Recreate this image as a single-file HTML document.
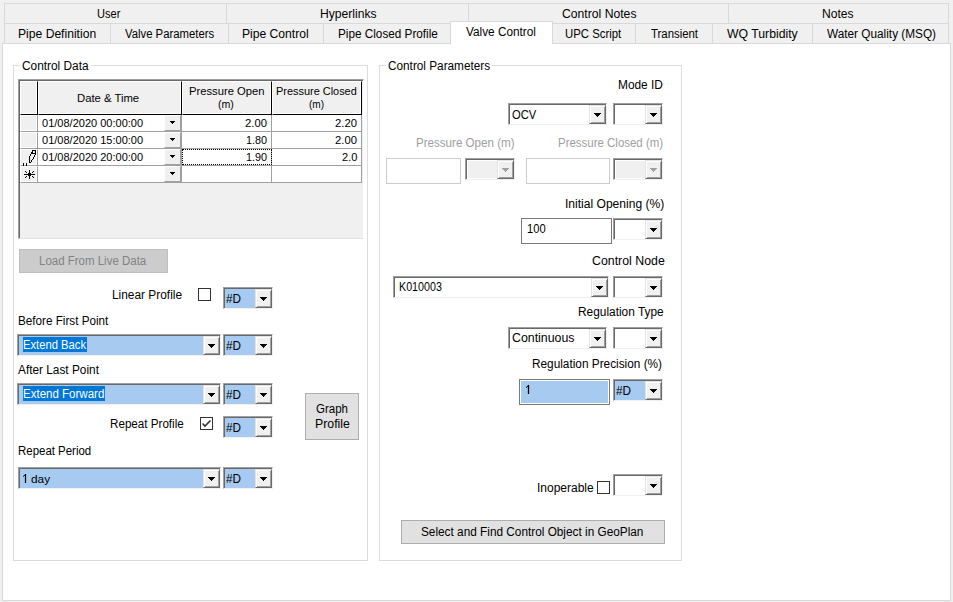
<!DOCTYPE html><html><head><meta charset="utf-8"><style>
html,body{margin:0;padding:0;}
body{width:953px;height:602px;position:relative;overflow:hidden;background:#f0f0f0;font-family:"Liberation Sans",sans-serif;font-size:12px;color:#000;}
.t{position:absolute;white-space:nowrap;line-height:14px;transform-origin:0 0;}
.b{position:absolute;box-sizing:border-box;}
.a{position:absolute;}
.cb{position:absolute;box-sizing:border-box;border-style:solid;border-width:1px;border-color:#a0a0a0 #f0f0f0 #f0f0f0 #a0a0a0;box-shadow:inset 1px 1px 0 #696969;}
.btn3{position:absolute;box-sizing:border-box;background:#f0f0f0;border-style:solid;border-width:1px;border-color:#e3e3e3 #696969 #696969 #e3e3e3;box-shadow:inset 1px 1px 0 #fff,inset -1px -1px 0 #a0a0a0;}
</style></head><body>

<div class="b" style="left:4px;top:3px;width:223px;height:21px;border:1px solid #d9d9d9;background:#f0f0f0;"></div>
<div class="b" style="left:226px;top:3px;width:243px;height:21px;border:1px solid #d9d9d9;background:#f0f0f0;"></div>
<div class="b" style="left:468px;top:3px;width:261px;height:21px;border:1px solid #d9d9d9;background:#f0f0f0;"></div>
<div class="b" style="left:728px;top:3px;width:221px;height:21px;border:1px solid #d9d9d9;background:#f0f0f0;"></div>
<div class="b" style="left:4px;top:23px;width:107px;height:21px;border:1px solid #d9d9d9;background:#f0f0f0;"></div>
<div class="b" style="left:110px;top:23px;width:119px;height:21px;border:1px solid #d9d9d9;background:#f0f0f0;"></div>
<div class="b" style="left:228px;top:23px;width:96px;height:21px;border:1px solid #d9d9d9;background:#f0f0f0;"></div>
<div class="b" style="left:323px;top:23px;width:128px;height:21px;border:1px solid #d9d9d9;background:#f0f0f0;"></div>
<div class="b" style="left:552px;top:23px;width:84px;height:21px;border:1px solid #d9d9d9;background:#f0f0f0;"></div>
<div class="b" style="left:635px;top:23px;width:78px;height:21px;border:1px solid #d9d9d9;background:#f0f0f0;"></div>
<div class="b" style="left:712px;top:23px;width:101px;height:21px;border:1px solid #d9d9d9;background:#f0f0f0;"></div>
<div class="b" style="left:812px;top:23px;width:137px;height:21px;border:1px solid #d9d9d9;background:#f0f0f0;"></div>
<div class="b" style="left:2px;top:43px;width:949px;height:558px;border:1px solid #d9d9d9;background:#fff;"></div>
<div class="b" style="left:450px;top:21px;width:103px;height:23px;border:1px solid #d9d9d9;border-bottom:none;background:#fff;"></div>
<div class="b" style="left:451px;top:43px;width:101px;height:2px;background:#fff;"></div>
<div class="t" style="left:96.82px;top:7px;font-size:12px;transform:scaleX(0.9204);">User</div>
<div class="t" style="left:319.51px;top:7px;font-size:12px;transform:scaleX(1.0094);">Hyperlinks</div>
<div class="t" style="left:561.63px;top:7px;font-size:12px;transform:scaleX(1.0151);">Control Notes</div>
<div class="t" style="left:821.71px;top:7px;font-size:12px;transform:scaleX(1.0073);">Notes</div>
<div class="t" style="left:17.90px;top:27px;font-size:12px;transform:scaleX(1.0100);">Pipe Definition</div>
<div class="t" style="left:124.89px;top:27px;font-size:12px;transform:scaleX(0.9430);">Valve Parameters</div>
<div class="t" style="left:242.40px;top:27px;font-size:12px;transform:scaleX(1.0099);">Pipe Control</div>
<div class="t" style="left:337.53px;top:27px;font-size:12px;transform:scaleX(0.9784);">Pipe Closed Profile</div>
<div class="t" style="left:466.28px;top:25px;font-size:12px;transform:scaleX(0.9826);">Valve Control</div>
<div class="t" style="left:564.69px;top:27px;font-size:12px;transform:scaleX(0.9482);">UPC Script</div>
<div class="t" style="left:650.89px;top:27px;font-size:12px;transform:scaleX(0.9481);">Transient</div>
<div class="t" style="left:727.01px;top:27px;font-size:12px;transform:scaleX(1.0198);">WQ Turbidity</div>
<div class="t" style="left:827.02px;top:27px;font-size:12px;transform:scaleX(0.9833);">Water Quality (MSQ)</div>
<div class="b" style="left:13px;top:65px;width:355px;height:496px;border:1px solid #dcdcdc;"></div>
<div class="b" style="left:20px;top:60px;width:71px;height:10px;background:#fff;"></div>
<div class="t" style="left:21.95px;top:59px;font-size:12px;transform:scaleX(0.9882);">Control Data</div>
<div class="b" style="left:379px;top:65px;width:303px;height:496px;border:1px solid #dcdcdc;"></div>
<div class="b" style="left:386px;top:60px;width:106px;height:10px;background:#fff;"></div>
<div class="t" style="left:387.95px;top:59px;font-size:12px;transform:scaleX(0.9814);">Control Parameters</div>
<div class="b" style="left:18px;top:79px;width:346px;height:160px;background:#f0f0f0;border-style:solid;border-width:1px;border-color:#a0a0a0 #fff #e3e3e3 #a0a0a0;box-shadow:inset 1px 1px 0 #696969;"></div>
<div class="b" style="left:20px;top:81px;width:18px;height:34px;background:#f0f0f0;border-style:solid;border-width:1px;border-color:#fff #000 #000 #fff;box-shadow:inset -1px -1px 0 #fff;"></div>
<div class="b" style="left:38px;top:81px;width:144px;height:34px;background:#f0f0f0;border-style:solid;border-width:1px;border-color:#fff #000 #000 #fff;box-shadow:inset -1px -1px 0 #fff;"></div>
<div class="b" style="left:182px;top:81px;width:90px;height:34px;background:#f0f0f0;border-style:solid;border-width:1px;border-color:#fff #000 #000 #fff;box-shadow:inset -1px -1px 0 #fff;"></div>
<div class="b" style="left:272px;top:81px;width:90px;height:34px;background:#f0f0f0;border-style:solid;border-width:1px;border-color:#fff #000 #000 #fff;box-shadow:inset -1px -1px 0 #fff;"></div>
<div class="t" style="left:77.45px;top:91px;font-size:11px;transform:scaleX(1.0270);">Date &amp; Time</div>
<div class="t" style="left:188.54px;top:84px;font-size:10.5px;transform:scaleX(1.0705);">Pressure Open</div>
<div class="t" style="left:218.48px;top:97px;font-size:10.5px;transform:scaleX(1.0076);">(m)</div>
<div class="t" style="left:275.96px;top:84px;font-size:10.5px;transform:scaleX(1.0405);">Pressure Closed</div>
<div class="t" style="left:309.21px;top:97px;font-size:10.5px;transform:scaleX(0.9593);">(m)</div>
<div class="b" style="left:20px;top:115px;width:18px;height:17px;background:#f0f0f0;border-style:solid;border-width:1px;border-color:#fff #a0a0a0 #a0a0a0 #fff;box-shadow:inset -1px -1px 0 #fff;"></div>
<div class="b" style="left:38px;top:115px;width:144px;height:17px;background:#fff;border-style:solid;border-width:0 1px 1px 0;border-color:#a0a0a0;"></div>
<div class="b" style="left:182px;top:115px;width:90px;height:17px;background:#fff;border-style:solid;border-width:0 1px 1px 0;border-color:#a0a0a0;"></div>
<div class="b" style="left:272px;top:115px;width:90px;height:17px;background:#fff;border-style:solid;border-width:0 1px 1px 0;border-color:#a0a0a0;"></div>
<div class="b" style="left:164px;top:115px;width:17px;height:16px;background:#f0f0f0;border-style:solid;border-width:1px;border-color:#fff #a0a0a0 #a0a0a0 #fff;"></div>
<svg class="a" style="left:170px;top:121px" width="5" height="3" shape-rendering="crispEdges" fill="#000"><rect x="0" y="0" width="5" height="1"/><rect x="1" y="1" width="3" height="1"/><rect x="2" y="2" width="1" height="1"/></svg>
<div class="b" style="left:20px;top:132px;width:18px;height:17px;background:#f0f0f0;border-style:solid;border-width:1px;border-color:#fff #a0a0a0 #a0a0a0 #fff;box-shadow:inset -1px -1px 0 #fff;"></div>
<div class="b" style="left:38px;top:132px;width:144px;height:17px;background:#fff;border-style:solid;border-width:0 1px 1px 0;border-color:#a0a0a0;"></div>
<div class="b" style="left:182px;top:132px;width:90px;height:17px;background:#fff;border-style:solid;border-width:0 1px 1px 0;border-color:#a0a0a0;"></div>
<div class="b" style="left:272px;top:132px;width:90px;height:17px;background:#fff;border-style:solid;border-width:0 1px 1px 0;border-color:#a0a0a0;"></div>
<div class="b" style="left:164px;top:132px;width:17px;height:16px;background:#f0f0f0;border-style:solid;border-width:1px;border-color:#fff #a0a0a0 #a0a0a0 #fff;"></div>
<svg class="a" style="left:170px;top:138px" width="5" height="3" shape-rendering="crispEdges" fill="#000"><rect x="0" y="0" width="5" height="1"/><rect x="1" y="1" width="3" height="1"/><rect x="2" y="2" width="1" height="1"/></svg>
<div class="b" style="left:20px;top:149px;width:18px;height:17px;background:#f0f0f0;border-style:solid;border-width:1px;border-color:#fff #a0a0a0 #a0a0a0 #fff;box-shadow:inset -1px -1px 0 #fff;"></div>
<div class="b" style="left:38px;top:149px;width:144px;height:17px;background:#fff;border-style:solid;border-width:0 1px 1px 0;border-color:#a0a0a0;"></div>
<div class="b" style="left:182px;top:149px;width:90px;height:17px;background:#fff;border-style:solid;border-width:0 1px 1px 0;border-color:#a0a0a0;"></div>
<div class="b" style="left:272px;top:149px;width:90px;height:17px;background:#fff;border-style:solid;border-width:0 1px 1px 0;border-color:#a0a0a0;"></div>
<div class="b" style="left:164px;top:149px;width:17px;height:16px;background:#f0f0f0;border-style:solid;border-width:1px;border-color:#fff #a0a0a0 #a0a0a0 #fff;"></div>
<svg class="a" style="left:170px;top:155px" width="5" height="3" shape-rendering="crispEdges" fill="#000"><rect x="0" y="0" width="5" height="1"/><rect x="1" y="1" width="3" height="1"/><rect x="2" y="2" width="1" height="1"/></svg>
<div class="b" style="left:20px;top:166px;width:18px;height:17px;background:#f0f0f0;border-style:solid;border-width:1px;border-color:#fff #a0a0a0 #a0a0a0 #fff;box-shadow:inset -1px -1px 0 #fff;"></div>
<div class="b" style="left:38px;top:166px;width:144px;height:17px;background:#fff;border-style:solid;border-width:0 1px 1px 0;border-color:#a0a0a0;"></div>
<div class="b" style="left:182px;top:166px;width:90px;height:17px;background:#fff;border-style:solid;border-width:0 1px 1px 0;border-color:#a0a0a0;"></div>
<div class="b" style="left:272px;top:166px;width:90px;height:17px;background:#fff;border-style:solid;border-width:0 1px 1px 0;border-color:#a0a0a0;"></div>
<div class="b" style="left:164px;top:166px;width:17px;height:16px;background:#f0f0f0;border-style:solid;border-width:1px;border-color:#fff #a0a0a0 #a0a0a0 #fff;"></div>
<svg class="a" style="left:170px;top:172px" width="5" height="3" shape-rendering="crispEdges" fill="#000"><rect x="0" y="0" width="5" height="1"/><rect x="1" y="1" width="3" height="1"/><rect x="2" y="2" width="1" height="1"/></svg>
<div class="t" style="left:41.86px;top:116px;font-size:11px;transform:scaleX(1.0017);">01/08/2020 00:00:00</div>
<div class="t" style="left:41.86px;top:133px;font-size:11px;transform:scaleX(1.0017);">01/08/2020 15:00:00</div>
<div class="t" style="left:41.86px;top:150px;font-size:11px;transform:scaleX(1.0017);">01/08/2020 20:00:00</div>
<div class="t" style="left:245.39px;top:116px;font-size:11px;transform:scaleX(1.0237);">2.00</div>
<div class="t" style="left:246.16px;top:133px;font-size:11px;transform:scaleX(0.9872);">1.80</div>
<div class="t" style="left:246.16px;top:150px;font-size:11px;transform:scaleX(0.9872);">1.90</div>
<div class="t" style="left:335.19px;top:116px;font-size:11px;transform:scaleX(1.0237);">2.20</div>
<div class="t" style="left:335.19px;top:133px;font-size:11px;transform:scaleX(1.0237);">2.00</div>
<div class="t" style="left:341.60px;top:150px;font-size:11px;transform:scaleX(1.0059);">2.0</div>
<div class="b" style="left:182px;top:149px;width:90px;height:16px;border:1px dotted #000;"></div>
<svg class="a" style="left:20px;top:148px" width="18" height="18" shape-rendering="crispEdges" fill="#000"><rect x="12" y="2" width="4" height="1"/><rect x="12" y="5" width="4" height="1"/><rect x="12" y="3" width="1" height="2"/><rect x="15" y="3" width="1" height="2"/><rect x="11" y="4" width="1" height="2"/><rect x="10" y="6" width="1" height="2"/><rect x="9" y="8" width="1" height="7"/><rect x="10" y="14" width="1" height="1"/><rect x="15" y="6" width="1" height="1"/><rect x="14" y="7" width="1" height="2"/><rect x="13" y="9" width="1" height="2"/><rect x="12" y="11" width="1" height="1"/><rect x="11" y="12" width="1" height="2"/><rect x="3" y="15" width="1" height="3"/><rect x="6" y="15" width="1" height="3"/></svg>
<svg class="a" style="left:20px;top:165px" width="18" height="18" shape-rendering="crispEdges" fill="#000"><rect x="9" y="5" width="1" height="9"/><rect x="4" y="9" width="11" height="1"/><rect x="8" y="8" width="3" height="3"/><rect x="5" y="6" width="1" height="1"/><rect x="6" y="7" width="1" height="1"/><rect x="13" y="6" width="1" height="1"/><rect x="12" y="7" width="1" height="1"/><rect x="5" y="12" width="1" height="1"/><rect x="6" y="11" width="1" height="1"/><rect x="13" y="12" width="1" height="1"/><rect x="12" y="11" width="1" height="1"/></svg>
<div class="b" style="left:19px;top:249px;width:149px;height:24px;background:#cccccc;border:1px solid #bfbfbf;"></div>
<div class="t" style="left:38.95px;top:254px;font-size:12px;transform:scaleX(0.9569);color:#838383;">Load From Live Data</div>
<div class="t" style="left:111.72px;top:288px;font-size:12px;transform:scaleX(0.9905);">Linear Profile</div>
<div class="b" style="left:198px;top:288px;width:13px;height:13px;box-sizing:border-box;border:1px solid #333;background:#fff;"></div>
<div class="cb" style="left:223px;top:287px;width:50px;height:22px;background:#a6caf0"></div>
<div class="btn3" style="left:255px;top:289px;width:17px;height:19px"></div>
<svg class="a" style="left:260px;top:297px" width="7" height="4" shape-rendering="crispEdges" fill="#000"><rect x="0" y="0" width="7" height="1"/><rect x="1" y="1" width="5" height="1"/><rect x="2" y="2" width="3" height="1"/><rect x="3" y="3" width="1" height="1"/></svg>
<div class="t" style="left:17.94px;top:314px;font-size:12px;transform:scaleX(0.9739);">Before First Point</div>
<div class="cb" style="left:17px;top:334px;width:204px;height:22px;background:#a6caf0"></div>
<div class="btn3" style="left:203px;top:336px;width:17px;height:19px"></div>
<svg class="a" style="left:208px;top:344px" width="7" height="4" shape-rendering="crispEdges" fill="#000"><rect x="0" y="0" width="7" height="1"/><rect x="1" y="1" width="5" height="1"/><rect x="2" y="2" width="3" height="1"/><rect x="3" y="3" width="1" height="1"/></svg>
<div class="b" style="left:23px;top:337px;width:64px;height:15px;background:#0078d7;"></div>
<div class="t" style="left:23.17px;top:338px;font-size:12px;transform:scaleX(0.9357);color:#fff;">Extend Back</div>
<div class="cb" style="left:223px;top:334px;width:50px;height:22px;background:#a6caf0"></div>
<div class="btn3" style="left:255px;top:336px;width:17px;height:19px"></div>
<svg class="a" style="left:260px;top:344px" width="7" height="4" shape-rendering="crispEdges" fill="#000"><rect x="0" y="0" width="7" height="1"/><rect x="1" y="1" width="5" height="1"/><rect x="2" y="2" width="3" height="1"/><rect x="3" y="3" width="1" height="1"/></svg>
<div class="t" style="left:17.78px;top:363px;font-size:12px;transform:scaleX(0.9863);">After Last Point</div>
<div class="cb" style="left:17px;top:383px;width:204px;height:22px;background:#a6caf0"></div>
<div class="btn3" style="left:203px;top:385px;width:17px;height:19px"></div>
<svg class="a" style="left:208px;top:393px" width="7" height="4" shape-rendering="crispEdges" fill="#000"><rect x="0" y="0" width="7" height="1"/><rect x="1" y="1" width="5" height="1"/><rect x="2" y="2" width="3" height="1"/><rect x="3" y="3" width="1" height="1"/></svg>
<div class="b" style="left:23px;top:386px;width:82px;height:15px;background:#0078d7;"></div>
<div class="t" style="left:23.15px;top:387px;font-size:12px;transform:scaleX(0.9600);color:#fff;">Extend Forward</div>
<div class="cb" style="left:223px;top:383px;width:50px;height:22px;background:#a6caf0"></div>
<div class="btn3" style="left:255px;top:385px;width:17px;height:19px"></div>
<svg class="a" style="left:260px;top:393px" width="7" height="4" shape-rendering="crispEdges" fill="#000"><rect x="0" y="0" width="7" height="1"/><rect x="1" y="1" width="5" height="1"/><rect x="2" y="2" width="3" height="1"/><rect x="3" y="3" width="1" height="1"/></svg>
<div class="t" style="left:109.54px;top:417px;font-size:12px;transform:scaleX(0.9697);">Repeat Profile</div>
<div class="b" style="left:200px;top:417px;width:13px;height:13px;box-sizing:border-box;border:1px solid #333;background:#fff;"></div>
<svg class="a" style="left:200px;top:417px" width="13" height="13"><path d="M2.5 6.5 L5 9 L10.5 3.5" stroke="#333" stroke-width="1.6" fill="none"/></svg>
<div class="cb" style="left:223px;top:416px;width:50px;height:22px;background:#a6caf0"></div>
<div class="btn3" style="left:255px;top:418px;width:17px;height:19px"></div>
<svg class="a" style="left:260px;top:426px" width="7" height="4" shape-rendering="crispEdges" fill="#000"><rect x="0" y="0" width="7" height="1"/><rect x="1" y="1" width="5" height="1"/><rect x="2" y="2" width="3" height="1"/><rect x="3" y="3" width="1" height="1"/></svg>
<div class="t" style="left:17.95px;top:444px;font-size:12px;transform:scaleX(0.9544);">Repeat Period</div>
<div class="cb" style="left:18px;top:467px;width:203px;height:22px;background:#a6caf0"></div>
<div class="btn3" style="left:203px;top:469px;width:17px;height:19px"></div>
<svg class="a" style="left:208px;top:477px" width="7" height="4" shape-rendering="crispEdges" fill="#000"><rect x="0" y="0" width="7" height="1"/><rect x="1" y="1" width="5" height="1"/><rect x="2" y="2" width="3" height="1"/><rect x="3" y="3" width="1" height="1"/></svg>
<div class="t" style="left:31.10px;top:472px;font-size:11.5px;transform:scaleX(1.0279);">day</div>
<svg class="a" style="left:18px;top:470px" width="12" height="16"><path d="M7.5 4 V13" stroke="#000" stroke-width="1.2"/><path d="M5 6.6 L7.6 4.4" stroke="#000" stroke-width="1"/></svg>
<div class="cb" style="left:223px;top:467px;width:50px;height:22px;background:#a6caf0"></div>
<div class="btn3" style="left:255px;top:469px;width:17px;height:19px"></div>
<svg class="a" style="left:260px;top:477px" width="7" height="4" shape-rendering="crispEdges" fill="#000"><rect x="0" y="0" width="7" height="1"/><rect x="1" y="1" width="5" height="1"/><rect x="2" y="2" width="3" height="1"/><rect x="3" y="3" width="1" height="1"/></svg>
<div class="b" style="left:305px;top:393px;width:54px;height:47px;background:#e1e1e1;border:1px solid #adadad;"></div>
<div class="t" style="left:315.87px;top:402px;font-size:12px;transform:scaleX(0.9578);">Graph</div>
<div class="t" style="left:314.59px;top:417px;font-size:12px;transform:scaleX(1.0259);">Profile</div>
<div class="t" style="left:617.72px;top:78px;font-size:12px;transform:scaleX(0.9906);">Mode ID</div>
<div class="cb" style="left:508px;top:103px;width:99px;height:22px;background:#fff"></div>
<div class="btn3" style="left:589px;top:105px;width:17px;height:19px"></div>
<svg class="a" style="left:594px;top:113px" width="7" height="4" shape-rendering="crispEdges" fill="#000"><rect x="0" y="0" width="7" height="1"/><rect x="1" y="1" width="5" height="1"/><rect x="2" y="2" width="3" height="1"/><rect x="3" y="3" width="1" height="1"/></svg>
<div class="t" style="left:511.73px;top:108px;font-size:12px;transform:scaleX(0.9306);">OCV</div>
<div class="cb" style="left:613px;top:103px;width:50px;height:22px;background:#fff"></div>
<div class="btn3" style="left:645px;top:105px;width:17px;height:19px"></div>
<svg class="a" style="left:650px;top:113px" width="7" height="4" shape-rendering="crispEdges" fill="#000"><rect x="0" y="0" width="7" height="1"/><rect x="1" y="1" width="5" height="1"/><rect x="2" y="2" width="3" height="1"/><rect x="3" y="3" width="1" height="1"/></svg>
<div class="t" style="left:415.64px;top:136px;font-size:12px;transform:scaleX(0.9658);color:#a0a0a0;">Pressure Open (m)</div>
<div class="t" style="left:557.75px;top:136px;font-size:12px;transform:scaleX(0.9554);color:#a0a0a0;">Pressure Closed (m)</div>
<div class="b" style="left:386px;top:158px;width:75px;height:26px;border:1px solid #cccccc;background:#fff;"></div>
<div class="cb" style="left:465px;top:158px;width:50px;height:22px;background:#f0f0f0"></div>
<div class="b" style="left:467px;top:160px;width:30px;height:19px;border:1px solid #fff;border-right:none;"></div>
<div class="btn3" style="left:497px;top:160px;width:17px;height:19px"></div>
<svg class="a" style="left:502px;top:168px" width="7" height="4" shape-rendering="crispEdges" fill="#a0a0a0"><rect x="0" y="0" width="7" height="1"/><rect x="1" y="1" width="5" height="1"/><rect x="2" y="2" width="3" height="1"/><rect x="3" y="3" width="1" height="1"/></svg>
<div class="b" style="left:526px;top:158px;width:84px;height:26px;border:1px solid #cccccc;background:#fff;"></div>
<div class="cb" style="left:613px;top:158px;width:50px;height:22px;background:#f0f0f0"></div>
<div class="b" style="left:615px;top:160px;width:30px;height:19px;border:1px solid #fff;border-right:none;"></div>
<div class="btn3" style="left:645px;top:160px;width:17px;height:19px"></div>
<svg class="a" style="left:650px;top:168px" width="7" height="4" shape-rendering="crispEdges" fill="#a0a0a0"><rect x="0" y="0" width="7" height="1"/><rect x="1" y="1" width="5" height="1"/><rect x="2" y="2" width="3" height="1"/><rect x="3" y="3" width="1" height="1"/></svg>
<div class="t" style="left:564.76px;top:197px;font-size:12px;transform:scaleX(1.0050);">Initial Opening (%)</div>
<div class="b" style="left:521px;top:218px;width:91px;height:26px;border:1px solid #7a7a7a;background:#fff;"></div>
<div class="t" style="left:527.11px;top:222px;font-size:12px;transform:scaleX(0.9282);">100</div>
<div class="cb" style="left:613px;top:218px;width:50px;height:22px;background:#fff"></div>
<div class="btn3" style="left:645px;top:220px;width:17px;height:19px"></div>
<svg class="a" style="left:650px;top:228px" width="7" height="4" shape-rendering="crispEdges" fill="#000"><rect x="0" y="0" width="7" height="1"/><rect x="1" y="1" width="5" height="1"/><rect x="2" y="2" width="3" height="1"/><rect x="3" y="3" width="1" height="1"/></svg>
<div class="t" style="left:591.82px;top:254px;font-size:12px;transform:scaleX(1.0289);">Control Node</div>
<div class="cb" style="left:393px;top:276px;width:216px;height:22px;background:#fff"></div>
<div class="btn3" style="left:591px;top:278px;width:17px;height:19px"></div>
<svg class="a" style="left:596px;top:286px" width="7" height="4" shape-rendering="crispEdges" fill="#000"><rect x="0" y="0" width="7" height="1"/><rect x="1" y="1" width="5" height="1"/><rect x="2" y="2" width="3" height="1"/><rect x="3" y="3" width="1" height="1"/></svg>
<div class="t" style="left:398.71px;top:280px;font-size:12px;transform:scaleX(0.8914);">K010003</div>
<div class="cb" style="left:613px;top:276px;width:50px;height:22px;background:#fff"></div>
<div class="btn3" style="left:645px;top:278px;width:17px;height:19px"></div>
<svg class="a" style="left:650px;top:286px" width="7" height="4" shape-rendering="crispEdges" fill="#000"><rect x="0" y="0" width="7" height="1"/><rect x="1" y="1" width="5" height="1"/><rect x="2" y="2" width="3" height="1"/><rect x="3" y="3" width="1" height="1"/></svg>
<div class="t" style="left:577.52px;top:305px;font-size:12px;transform:scaleX(0.9904);">Regulation Type</div>
<div class="cb" style="left:508px;top:327px;width:99px;height:22px;background:#fff"></div>
<div class="btn3" style="left:589px;top:329px;width:17px;height:19px"></div>
<svg class="a" style="left:594px;top:337px" width="7" height="4" shape-rendering="crispEdges" fill="#000"><rect x="0" y="0" width="7" height="1"/><rect x="1" y="1" width="5" height="1"/><rect x="2" y="2" width="3" height="1"/><rect x="3" y="3" width="1" height="1"/></svg>
<div class="t" style="left:511.62px;top:331px;font-size:12px;transform:scaleX(1.0286);">Continuous</div>
<div class="cb" style="left:613px;top:327px;width:50px;height:22px;background:#fff"></div>
<div class="btn3" style="left:645px;top:329px;width:17px;height:19px"></div>
<svg class="a" style="left:650px;top:337px" width="7" height="4" shape-rendering="crispEdges" fill="#000"><rect x="0" y="0" width="7" height="1"/><rect x="1" y="1" width="5" height="1"/><rect x="2" y="2" width="3" height="1"/><rect x="3" y="3" width="1" height="1"/></svg>
<div class="t" style="left:532.33px;top:357px;font-size:12px;transform:scaleX(0.9844);">Regulation Precision (%)</div>
<div class="b" style="left:519px;top:379px;width:91px;height:26px;border:1px solid #7a7a7a;background:#a6caf0;box-shadow:inset 0 0 0 1px #fff;"></div>
<svg class="a" style="left:520px;top:380px" width="20" height="20"><path d="M8.5 5 V14" stroke="#000" stroke-width="1.3"/><path d="M6 7.6 L8.6 5.4" stroke="#000" stroke-width="1"/></svg>
<div class="cb" style="left:613px;top:379px;width:50px;height:22px;background:#a6caf0"></div>
<div class="btn3" style="left:645px;top:381px;width:17px;height:19px"></div>
<svg class="a" style="left:650px;top:389px" width="7" height="4" shape-rendering="crispEdges" fill="#000"><rect x="0" y="0" width="7" height="1"/><rect x="1" y="1" width="5" height="1"/><rect x="2" y="2" width="3" height="1"/><rect x="3" y="3" width="1" height="1"/></svg>
<div class="t" style="left:536.67px;top:481px;font-size:12px;transform:scaleX(0.9998);">Inoperable</div>
<div class="b" style="left:597px;top:481px;width:13px;height:13px;box-sizing:border-box;border:1px solid #333;background:#fff;"></div>
<div class="cb" style="left:613px;top:474px;width:50px;height:22px;background:#fff"></div>
<div class="btn3" style="left:645px;top:476px;width:17px;height:19px"></div>
<svg class="a" style="left:650px;top:484px" width="7" height="4" shape-rendering="crispEdges" fill="#000"><rect x="0" y="0" width="7" height="1"/><rect x="1" y="1" width="5" height="1"/><rect x="2" y="2" width="3" height="1"/><rect x="3" y="3" width="1" height="1"/></svg>
<div class="b" style="left:401px;top:520px;width:264px;height:24px;background:#e1e1e1;border:1px solid #adadad;"></div>
<div class="t" style="left:421.21px;top:525px;font-size:12px;transform:scaleX(0.9836);">Select and Find Control Object in GeoPlan</div>
<div class="t" style="left:226.43px;top:292px;font-size:12px;transform:scaleX(0.9779);">#D</div>
<div class="t" style="left:226.43px;top:339px;font-size:12px;transform:scaleX(0.9779);">#D</div>
<div class="t" style="left:226.43px;top:388px;font-size:12px;transform:scaleX(0.9779);">#D</div>
<div class="t" style="left:226.43px;top:421px;font-size:12px;transform:scaleX(0.9779);">#D</div>
<div class="t" style="left:226.43px;top:472px;font-size:12px;transform:scaleX(0.9779);">#D</div>
<div class="t" style="left:616.43px;top:384px;font-size:12px;transform:scaleX(0.9779);">#D</div>
</body></html>
